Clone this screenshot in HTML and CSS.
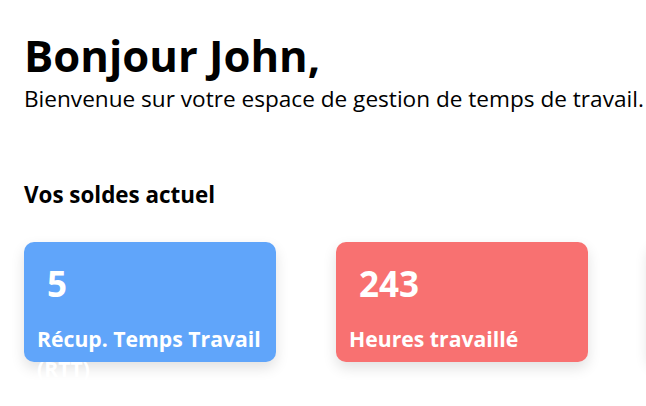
FILE: index.html
```html
<!DOCTYPE html>
<html lang="fr">
<head>
<meta charset="utf-8">
<title>Accueil</title>
<link rel="stylesheet" href="styles.css">
</head>
<body>
<main class="page">
  <header class="welcome">
    <h1 class="welcome-title">Bonjour John,</h1>
    <p class="welcome-text">Bienvenue sur votre espace de gestion de temps de travail.</p>
  </header>
  <section class="balances">
    <h2 class="balances-title">Vos soldes actuel</h2>
    <div class="cards">
      <div class="card card-blue">
        <span class="card-value">5</span>
        <span class="card-label">Récup. Temps Travail (RTT)</span>
      </div>
      <div class="card card-red">
        <span class="card-value">243</span>
        <span class="card-label">Heures travaillé</span>
      </div>
      <div class="card card-white" aria-hidden="true"></div>
    </div>
  </section>
</main>
</body>
</html>
```
FILE: styles.css
```css
* { box-sizing: border-box; }
html, body { margin: 0; padding: 0; background: #fff; overflow: hidden; }
body {
  font-family: "Open Sans", "Noto Sans", sans-serif;
  color: #000;
  width: 646px;
  height: 406px;
}
.page {
  padding: 29px 24px 0 24px;
}
.welcome-title {
  margin: 0;
  font-size: 43.6px;
  line-height: 52px;
  font-weight: 700;
}
.welcome-text {
  margin: 3px 0 0 0;
  font-size: 22.6px;
  line-height: 30px;
  white-space: nowrap;
}
.balances-title {
  margin: 66px 0 0 0;
  font-size: 22.4px;
  line-height: 30px;
  font-weight: 700;
}
.cards {
  display: flex;
  gap: 60px;
  margin-top: 32px;
}
.card {
  flex: 0 0 252px;
  height: 120px;
  border-radius: 10px;
  padding: 20px 8px 0 13px;
  display: flex;
  flex-direction: column;
  color: #fff;
  box-shadow: 0 6px 14px rgba(0,0,0,0.12);
}
.card-blue { background: #60a5fa; }
.card-red { background: #f87171; }
.card-white { background: #fff; }
.card-value {
  font-size: 35px;
  font-weight: 700;
  line-height: 44px;
  padding-left: 10px;
}
.card-label {
  margin-top: 18px;
  font-size: 21.2px;
  font-weight: 700;
  line-height: 30px;
}
```
